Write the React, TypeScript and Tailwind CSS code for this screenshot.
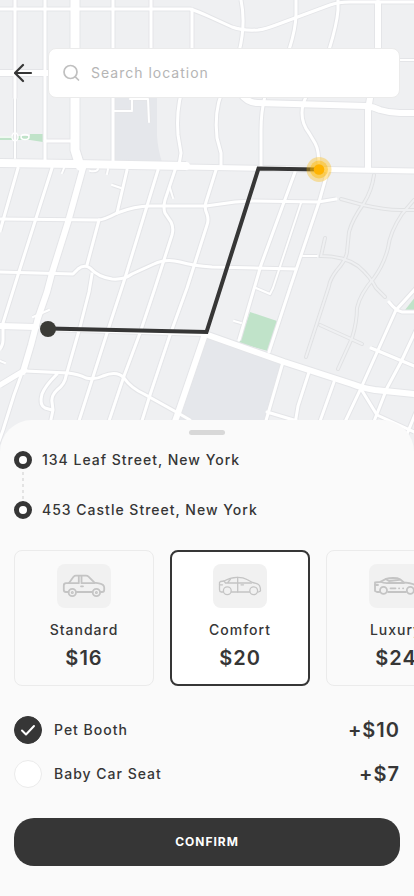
import { useState } from 'react';
import type { ReactNode } from 'react';

type Road = { d: string; w: number };

const roads: Road[] = [
  // top left grid
  { d: 'M0 9H190Q197 11 210 17L232 27Q243 31 258 30Q266 29 276 25L330 5Q338 2 350 2H414', w: 3 },
  { d: 'M15 0V98', w: 3 },
  { d: 'M15 98V158', w: 2 },
  { d: 'M45 0V160', w: 3 },
  { d: 'M113 0V162', w: 3 },
  { d: 'M151 0V60', w: 3 },
  { d: 'M192 9V60', w: 3 },
  { d: 'M45 141H74', w: 3 },
  { d: 'M0 73H48', w: 6 },
  { d: 'M114 111H132M132 99V110M130 99H148L149 122', w: 2 },
  { d: 'M182 90Q176 112 178 135L181 153L179 165', w: 3 },
  // top right
  { d: 'M241 0Q246 24 239 52', w: 3 },
  { d: 'M296 0V14Q296 28 289 50', w: 3 },
  { d: 'M338 0V10Q337 24 329 50', w: 3 },
  { d: 'M378 3V55', w: 6 },
  { d: 'M398 60H414', w: 2 },
  { d: 'M240 93Q247 103 258 103L366 106Q374 107 380 110Q390 113 400 113H414', w: 6 },
  { d: 'M371 92L368 110V168', w: 6 },
  { d: 'M222 92Q214 112 217 138L221 153V166', w: 3 },
  { d: 'M265 96Q261 112 261 130V166', w: 3 },
  { d: 'M307 95Q302 104 302 113Q302 124 309 133L315 143Q319 150 319 166', w: 3 },
  // centre
  { d: 'M18 168L0 231', w: 3 },
  { d: 'M52 168L18 275L3 323V340Q3 345 0 349', w: 3 },
  { d: 'M127 170L117 213', w: 3 },
  { d: 'M158 170L125 278L107 333L78 424', w: 3 },
  { d: 'M175 170L165 200Q163 208 165 213L171 222Q174 228 172 235L155 288L140 333L124 376L108 424', w: 3 },
  { d: 'M216 170L206 202Q204 208 207 214Q209 220 207 225L187 288L170 335L150 395L141 424', w: 3 },
  { d: 'M99 220L87 265M92 274L89 292L80 327L66 376Q65 384 57 390Q51 396 52 402L53 410L50 424', w: 3 },
  { d: 'M57 374Q45 386 42 394Q39 405 45 408L52 410', w: 3 },
  { d: 'M0 219L98 220Q104 220 117 213Q135 206 150 206L206 206L235 202L252 201L318 202L336 199', w: 3 },
  { d: 'M0 272L73 274L78 269Q84 264 90 268Q98 277 112 279Q124 280 132 274L154 264Q166 258 180 262Q194 266 212 267L296 269', w: 3 },
  { d: 'M25 371L68 373Q78 374 86 378Q95 380 103 376Q117 370 124 378Q131 388 144 394L178 413L190 420', w: 3 },
  { d: 'M295 172L261 265L239 340', w: 3 },
  { d: 'M301 203L273 288L270 294L256 288', w: 2 },
  { d: 'M328 170L319 202L290 288L269 352', w: 3 },
  { d: 'M303 256H317', w: 2 },
  { d: 'M283 362L265 424M309 372L298 406L295 424M334 382L319 424M267 412L297 421', w: 3 },
  // bottom right
  { d: 'M389 302Q396 311 402 312H414', w: 3 },
  { d: 'M416 288L396 310L361 388L344 424', w: 3 },
  { d: 'M371 348L414 366', w: 3 },
  { d: 'M416 330L401 362L387 388L373 424', w: 3 },
  { d: 'M361 389L377 415L414 432M416 412L407 434', w: 3 },
  { d: 'M23 370L14 395L3 430L-2 444', w: 3 },
  { d: 'M25 370L0 385', w: 5 },
  // short ends
  { d: 'M62 173L64 168M107 174L108 169M98 169Q97 172 90 171M112 185L121 188M170 188L173 198', w: 2 },
  { d: 'M33 317L49 310M0 361L5 363M234 321L241 323', w: 2 },
  // main roads
  { d: 'M75 0V150L80 166', w: 9 },
  { d: 'M83 168L68 222L52 273L47 292L38 318L31 345L23 372', w: 6 },
  { d: 'M0 326L36 327', w: 6 },
  { d: 'M46 329L206 334', w: 4 },
  { d: 'M205 334L284 362L352 384Q362 388 375 390L414 394', w: 6 },
  { d: 'M205 334L178 413L174 424', w: 6 },
  { d: 'M186 167L414 171', w: 5 },
  { d: 'M-4 163L75 164L186 166', w: 8 },
];

// unpaved lanes, drawn as an outline only
const lanes = [
  'M341 199L363 205Q385 210 400 210H414',
  'M374 175Q372 190 364 203Q352 220 349 232L347 252Q346 260 337 270Q330 279 329 286L306 357',
  'M325 238L321 256Q344 256 358 266Q370 276 376 288L385 297',
  'M414 200L402 214Q390 232 388 248Q384 264 374 278Q360 294 357 308Q357 322 352 338L338 369',
  'M320 325L362 344',
];

function CityMap() {
  return (
    <svg
      className="absolute inset-x-0 top-0 h-[calc(100%+32px)] w-full"
      viewBox="0 0 414 452"
      preserveAspectRatio="xMidYMid slice"
      fill="none"
      role="img"
      aria-label="Route map"
    >
      <rect width="414" height="452" fill="#eff0f2" />
      <path d="M113 97H157V136Q158 150 162 162H113Z" fill="#e5e7eb" />
      <path d="M206 337L282 362L264 424H176Z" fill="#e5e7eb" />
      <path d="M250 312L277 321L268 351L239 343Z" fill="#c0e3c9" />
      <path d="M405 310L416 296V310Z" fill="#c0e3c9" />
      <path d="M0 136H30V134H43V142L30 140H0Z" fill="#c0e3c9" />

      <g stroke="#e0e1e3" strokeWidth="4" strokeLinecap="round">
        {lanes.map((d) => <path key={d} d={d} />)}
      </g>
      <g stroke="#eff0f2" strokeWidth="2" strokeLinecap="round">
        {lanes.map((d) => <path key={d} d={d} />)}
      </g>

      <g stroke="#e4e5e8">
        {roads.map((road) => <path key={road.d} d={road.d} strokeWidth={road.w + 2} />)}
      </g>
      <g stroke="#ffffff" strokeLinecap="round" strokeLinejoin="round">
        {roads.map((road) => <path key={road.d} d={road.d} strokeWidth={road.w} />)}
        <ellipse cx="15" cy="137" rx="3" ry="4" strokeWidth="1.5" />
        <ellipse cx="25" cy="137" rx="4" ry="2.5" strokeWidth="1.5" />
        <path d="M0 137H11" strokeWidth="1.5" />
      </g>

      {/* Route */}
      <path d="M48 328.5L206.5 332L258.5 168.5L319 169.5" stroke="#363636" strokeWidth="4" />
      <circle cx="48" cy="329" r="8" fill="#3b3b37" />
      <circle cx="319" cy="169.5" r="12.5" fill="#ffb800" fillOpacity="0.35" />
      <circle cx="319" cy="169.5" r="9" fill="#ffb800" fillOpacity="0.45" />
      <circle cx="319" cy="169.5" r="5.3" fill="#ffb300" />
    </svg>
  );
}

function StandardCar() {
  return (
    <svg className="h-11 w-[54px]" viewBox="0 0 54 44" fill="none" stroke="#c4c4c4" strokeWidth="1.8" strokeLinejoin="round" strokeLinecap="round">
      <path d="M11.5 28H9Q6.800 28 6.800 26V21.500Q6.800 19.300 9 19.200L12 19L16.500 12.800Q17.500 11.700 19 11.700H29Q30.500 11.700 31.500 12.700L37.500 18.700L42 19.300Q47.200 20.300 47.200 23.500V26Q47.200 28 45 28H43.200M35.500 28H19.200" />
      <path d="M12 19.200H21.800V12M24.500 12V19.200H37.500M24 22.300H26" />
      <circle cx="15.300" cy="28.500" r="3.700" />
      <circle cx="39.400" cy="28.500" r="3.700" />
      <circle cx="15.300" cy="28.500" r="0.600" />
      <circle cx="39.400" cy="28.500" r="0.600" />
    </svg>
  );
}

function ComfortCar() {
  return (
    <svg className="h-11 w-[54px]" viewBox="0 0 54 44" fill="none" stroke="#c4c4c4" strokeWidth="1.3" strokeLinejoin="round" strokeLinecap="round">
      <path d="M10.300 28H8Q6.500 27.500 6.500 25.500V18.500L7.500 17.500L11 17Q17 13.500 24 13.300Q30 13.100 34 15.500L39.500 18.500Q45.500 19.600 46.500 21.500Q47.500 23.500 47.500 27L45.500 28M36.600 28H18.400" />
      <path d="M11 17L12.500 19H38.500M17.500 15L14.500 19M24.700 13.500V28M28 20.800H30.500M6.500 20.800H9.500" />
      <circle cx="14.300" cy="26.800" r="3.900" />
      <circle cx="40.700" cy="26.800" r="3.900" />
    </svg>
  );
}

function LuxuryCar() {
  return (
    <svg className="h-11 w-[54px]" viewBox="0 0 54 44" fill="none" stroke="#c4c4c4" strokeWidth="1.8" strokeLinejoin="round" strokeLinecap="round">
      <path d="M10.500 28H8L6 27V18.500L11.500 17.800L17 14.900Q20 14 24 14Q29 14 31 15.200L35 18.500Q43 19 46 21Q48 23 47.500 27L45.500 28M37 28H19" />
      <path d="M11.500 17.800Q15 19.500 20 19H35M17 15.200L20 17L30.500 15.800M21.500 24.300H26.500M30 24.300H30.200M34 24.300H34.200M6 21H9" />
      <circle cx="14.500" cy="26.300" r="3.500" />
      <circle cx="41.300" cy="26.300" r="3.500" />
    </svg>
  );
}

const rides: { name: string; price: number; icon: ReactNode }[] = [
  { name: 'Standard', price: 16, icon: <StandardCar /> },
  { name: 'Comfort', price: 20, icon: <ComfortCar /> },
  { name: 'Luxury', price: 24, icon: <LuxuryCar /> },
];

const extras = [
  { name: 'Pet Booth', price: 10, checked: true },
  { name: 'Baby Car Seat', price: 7, checked: false },
];

function Stop({ address }: { address: string }) {
  return (
    <li className="flex h-5 items-center gap-2.5">
      <span className="h-[18px] w-[18px] rounded-full border-5 border-[#363636] bg-white" />
      <span>{address}</span>
    </li>
  );
}

export default function App() {
  const [ride, setRide] = useState('Comfort');

  return (
    <div className="flex min-h-screen flex-col bg-[#fafafa] font-['Inter',sans-serif] text-sm font-medium tracking-[1px] text-[#363636]">
      {/* Map */}
      <section className="relative min-h-80 flex-1">
        <CityMap />
        <div className="relative flex items-center gap-3.5 px-3.5 pt-12">
          <button type="button" aria-label="Back" className="w-5">
            <svg className="h-5 w-5" viewBox="0 0 20 20" fill="none" stroke="#363636" strokeWidth="2.2" strokeLinecap="round" strokeLinejoin="round">
              <path d="M17 10H1M9 2L1 10L9 18" />
            </svg>
          </button>
          <label className="flex h-[50px] flex-1 items-center gap-2.5 rounded-lg border border-[#ebebeb] bg-white px-3.5">
            <svg className="h-[18px] w-[18px]" viewBox="0 0 18 18" fill="none" stroke="#c0c0c0" strokeWidth="1.7" strokeLinecap="round">
              <circle cx="7.500" cy="8" r="6.500" />
              <path d="M12.300 12.800L15.500 16" />
            </svg>
            <input
              type="text"
              aria-label="Search location"
              placeholder="Search location"
              className="min-w-0 flex-1 bg-transparent font-normal tracking-[1px] outline-none placeholder:text-[#b5b5b5]"
            />
          </label>
        </div>
      </section>

      {/* Bottom sheet */}
      <main className="relative flex flex-col gap-[30px] rounded-t-[32px] bg-[#fafafa] px-3.5 pt-2.5 pb-[30px]">
        <div>
          <div className="mx-auto h-[5px] w-9 rounded-full bg-[#d8d8d8]" />
          <ul className="mt-[15px]">
            <Stop address="134 Leaf Street, New York" />
            <li aria-hidden="true" className="flex h-[30px] w-[18px] justify-center">
              <svg className="h-full w-0.5" viewBox="0 0 2 30">
                <path d="M1 2V30" stroke="#dcdcdc" strokeWidth="1.5" strokeDasharray="3 3" />
              </svg>
            </li>
            <Stop address="453 Castle Street, New York" />
          </ul>
        </div>

        {/* Ride types */}
        <div className="-mx-3.5 flex gap-4 overflow-x-auto px-3.5 [scrollbar-width:none]">
          {rides.map(({ name, price, icon }) => (
            <label
              key={name}
              className={`relative flex h-[136px] w-[140px] shrink-0 cursor-pointer flex-col items-center justify-center rounded-lg ${
                ride === name ? 'border-2 border-[#363636] bg-white' : 'border border-[#ebebeb]'
              }`}
            >
              <input type="radio" name="ride" className="sr-only" checked={ride === name} onChange={() => setRide(name)} />
              <span className="rounded-lg bg-[#f1f1f1]">{icon}</span>
              <span className="mt-3 leading-5">{name}</span>
              <span className="mt-1 text-xl leading-7 font-semibold">${price}</span>
            </label>
          ))}
        </div>

        {/* Extras */}
        <div className="flex flex-col gap-4">
          {extras.map(({ name, price, checked }) => (
            <label key={name} className="flex h-7 cursor-pointer items-center gap-3">
              <span className="grid">
                <input
                  type="checkbox"
                  defaultChecked={checked}
                  className="peer col-start-1 row-start-1 h-7 w-7 appearance-none rounded-full border border-[#ebebeb] bg-white checked:border-[#363636] checked:bg-[#363636]"
                />
                <svg
                  className="pointer-events-none invisible col-start-1 row-start-1 h-7 w-7 peer-checked:visible"
                  viewBox="0 0 28 28"
                  fill="none"
                  stroke="#ffffff"
                  strokeWidth="2"
                  strokeLinecap="round"
                  strokeLinejoin="round"
                >
                  <path d="M8 14.500L12 18.500L20 10" />
                </svg>
              </span>
              <span className="flex-1">{name}</span>
              <span className="text-xl font-semibold">+${price}</span>
            </label>
          ))}
        </div>

        <button type="button" className="h-12 rounded-[20px] bg-[#363636] text-xs font-bold tracking-[1px] text-white">
          CONFIRM
        </button>
      </main>
    </div>
  );
}
